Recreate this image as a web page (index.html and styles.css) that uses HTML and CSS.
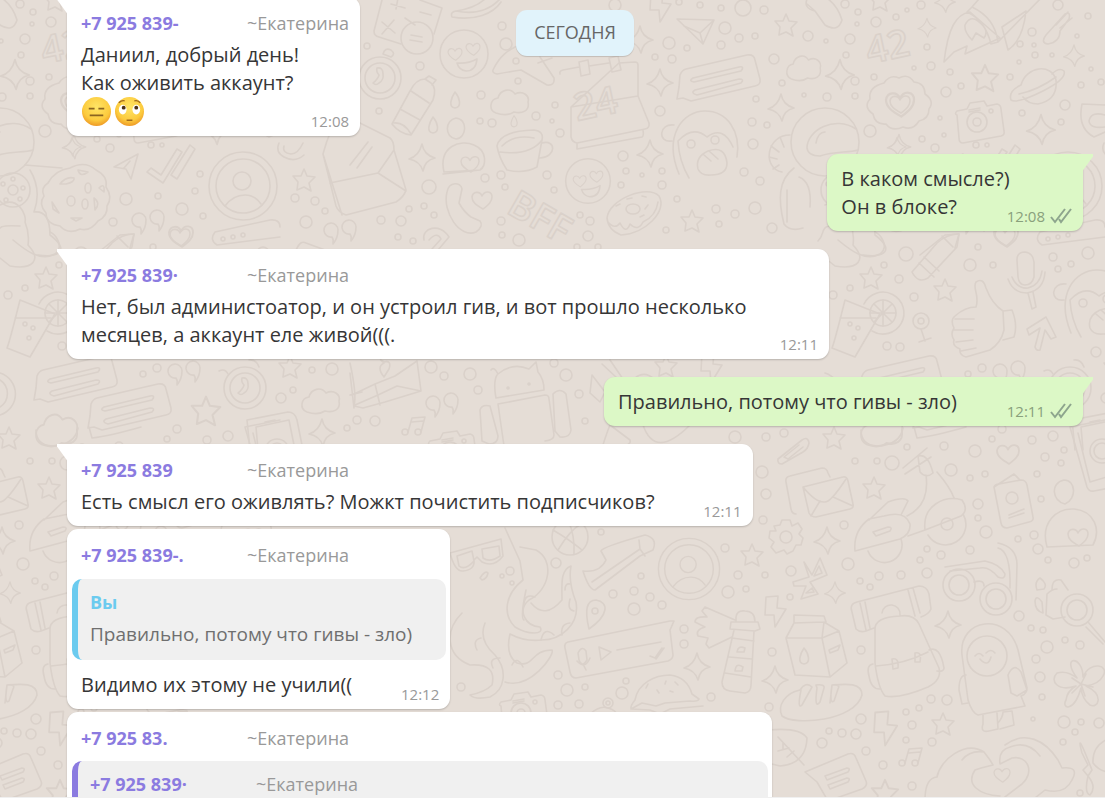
FILE: index.html
```
<!DOCTYPE html>
<html lang="ru">
<head>
  <meta charset="UTF-8">
  <meta name="viewport" content="width=device-width, initial-scale=1.0">
  <title>Чат</title>
  <link rel="stylesheet" href="styles.css">
</head>
<body>
  <!-- Wallpaper doodles, the tile repeats every 825px -->
  <svg class="wallpaper" aria-hidden="true">
    <defs>
      <path id="star" d="M0-11 3-4 11-3 5 3 7 11 0 7-7 10-6 2-11-4-3-4Z"/>
      <path id="spark" d="M0-14Q2-3 13 0Q3 2 1 13Q-2 3-13 1Q-3-2 0-14Z"/>
      <path id="heart" d="M1 9C-6 5-10 2-10-3C-9-9-2-9 0-4C3-10 10-9 10-3C10 2 6 5 1 9Z"/>
      <path id="cloud" d="M-14 11C-22 8-20-3-12-4C-10-12 0-15 5-8C13-12 20-6 18 0C20 9 12 12 4 10C-2 14-8 13-14 11Z"/>
      <path id="drop" d="M0-9C5-3 7 6 0 7C-7 6-4-3 0-9Z"/>
      <path id="bolt" d="M-8-15 4-16 3-4 12-3 1 15 0 3-9 3Z"/>
      <path id="quote" d="M-9 5A7 7 0 1 1-3-2Q-3 6-8 12Q-7 8-9 5ZM9 2A7 7 0 1 1 15-5Q15 3 10 9Q11 5 9 2Z"/>
      <path id="tick" d="M-20 3-16-1-6 6 10-20 15-17-4 14ZM4 6 23-24 28-20 10 10Z"/>
      <g id="note"><path d="M-5 6-1-8 12-9 8 6M-1-4 10-5"/><circle cx="-8" cy="6" r="3"/><circle cx="5" cy="6" r="3"/></g>
      <g id="love"><circle r="24"/><use href="#heart" transform="translate(-9 0) scale(.7)"/><use href="#heart" transform="translate(9-5) scale(.7)"/><path d="M-7 9Q4 10 13 5Q12 17 2 17Q-5 16-7 9Z"/></g>
      <g id="person"><circle r="34"/><circle r="27"/><circle cx="-1" cy="-5" r="9"/><path d="M-18 20Q-10 9 2 9Q12 9 18 18"/></g>
      <g id="clock"><circle r="21"/><circle r="15"/><path d="M-3-10Q-4-6-1-3Q-2 1-7 5Q-4 8-1 5Q4 2 3-4Q3-11-3-10Z"/></g>
      <g id="camera"><path d="M-20-7Q-23-8-20-11L-10-13-7-19 7-21 10-16 20-18Q24-17 24-13L27 9Q28 13 24 14L-14 21Q-18 21-18 16Z"/><circle r="10"/><circle r="4"/><circle cx="14" cy="-11" r="2"/><path d="M-8-12 3-14M-8-10 3-12"/></g>
      <g id="letter"><path d="M-34 22Q-38 22-39 17L-44-10Q-45-15-40-16L-8-24Q-3-24-2-19L0-15"/><path d="M-27-5 13-15Q17-16 18-11L23 12Q24 16 20 17L-14 25Q-19 25-21 21ZM-27-5Q-14 11-5 10Q1 10 16-13M-19 24-10 9M3 5 23 14"/></g>
      <g id="lines"><path d="M-33-15 28-29Q35-30 36-24L41-5Q42 1 36 2L-28 17-36 14-42 15-40 3-39-9Q-37-14-33-15Z"/><path d="M-26-6 20-17Q26-18 22-13L-25-2Q-31-3-26-6ZM-24 6 20-5Q26-5 22-1L-22 11Q-29 9-24 6Z"/></g>
      <g id="monkey"><path d="M-24 25C-40-14-20-38 2-38C24-38 38-18 34 8M-31-8C-46-6-44-26-29-24M-14 29Q-24 12-25-8Q-10-24 4-12Q20-24 30-2"/><circle cx="-12" cy="-5" r="4"/><circle cx="12" cy="-9" r="4"/><path d="M-5 20Q-8 8 5 2Q22-4 24 14Q24 26 8 26Q-2 27-5 20ZM1 6 8 12M6 2 15 10"/></g>
      <g id="drink"><path d="M-25-30 10-16-15 27-38 18Q-36 14-25-30ZM-30-12 6-12"/><path d="M-6-26A21 21 0 1 1 2 1"/><circle cx="13" cy="-17" r="13"/><path d="M13-30V-4M0-17H26M4-26 22-8M4-8 22-26"/><circle cx="-20" cy="-6" r="2"/><circle cx="-12" cy="-2" r="2"/><circle cx="-16" cy="8" r="2"/></g>

      <g id="tile">
        <!-- top row -->
        <path d="M382 0 374 31Q374 36 379 37L401 44M434 34 442 8 420 0M391 4 405 8M398-2 396 9M420 12 431 15M382 22 395 33M394 20 382 34M405 18 415 25"/>
        <circle cx="417" cy="38" r="16"/><path d="M411 35 422 37M410 40 422 42"/>
        <path d="M500-1C488 12 471 14 456 11Q450 12 452 17C475 21 493 14 501 2M456 11C470 9 480 4 486-2"/>
        <use href="#love" x="464" y="54"/>
        <use href="#love" transform="translate(588 181) scale(.93)"/>
        <use href="#clock" x="380" y="78"/>
        <path d="M383 54Q385 47 391 50Q396 54 391 57Z"/>
        <path d="M392 124 410 91Q416 79 425 79L431 83Q437 88 433 100L411 135Q400 134 392 124ZM400 109 420 120M411 91 429 103M394 123Q404 122 411 134M425 79 429 76 436 80 432 85"/>
        <use href="#drop" x="455" y="101"/><use href="#drop" x="433" y="126"/><use href="#drop" transform="translate(514 122) scale(.7)"/>
        <path d="M493 70C500 55 509 50 517 46M540 57 554 78Q555 86 547 85L521 70Q508 72 497 74Q492 73 493 70M552 58 538 63"/>
        <use href="#cloud" x="510" y="102"/>
        <path d="M560 74Q559 71 563 70L579 67M589 66 609 63M619 63 635 62Q638 62 638 65V96L649 123Q650 128 645 129L577 143Q572 142 571 137V107ZM571 107 638 96M577 143V149L642 137Q644 136 643 130M579 62 588 60 590 74 581 76ZM609 58 618 56 621 70 612 72Z"/>
        <text class="doodle-text" transform="translate(577 121) rotate(-12)">24</text>
        <path d="M497 146Q500 131 534 130Q544 131 542 140L537 167Q524 174 507 170Q499 158 497 146ZM500 152Q530 156 542 140M502 146Q514 134 534 138M542 143C556 139 557 157 540 158"/>
        <path d="M456 118C468 119 467 138 456 139C444 137 445 120 456 118ZM444 172C438 146 461 139 474 145C488 151 486 166 480 170ZM443 174 480 170"/>
        <use href="#heart" transform="translate(470 164) scale(.9)"/>
        <path d="M447 192C449 181 461 182 462 189L459 203Q464 212 471 217L480 221Q484 226 476 232C460 239 442 212 447 192Z"/>
        <use href="#heart" x="482" y="200"/>
        <text class="doodle-text" transform="translate(505 212) rotate(30)">BFF</text>
        <path d="M607 218C609 199 648 184 659 196C668 211 645 234 621 235Q608 230 607 218ZM608 222Q615 230 620 223Q626 235 630 224Q638 232 643 222Q656 216 658 202M616 206 620 204M627 199 632 198M642 196 646 197M648 205 645 209M640 217 644 215"/><ellipse cx="633" cy="209" rx="7" ry="5"/>
        <use href="#star" x="692" y="221"/><use href="#spark" x="422" y="158"/><use href="#spark" x="650" y="154"/><use href="#spark" x="660" y="83"/><use href="#spark" x="640" y="40"/>
        <use href="#bolt" x="659" y="7"/>
        <path d="M677 19 714 20 703 44ZM703 44 700 33 714 20M684 26 700 33"/>
        <use href="#lines" x="719" y="84"/>
        <use href="#monkey" x="703" y="149"/>
        <path d="M323 154Q330 128 340 115L360 123 390 138Q394 141 394 150L406 190Q404 197 396 202L346 215Q338 212 336 206ZM323 154 342 215M330 183 378 173 406 191M378 173 394 150M350 165 368 142M357 168 372 147"/>
        <path d="M424 240C421 228 440 222 449 237L438 250M429 240Q437 231 441 239L432 249"/>

        <!-- rocket, planet and other space bits -->
        <use href="#star" x="786" y="25"/><use href="#star" transform="translate(985 78) scale(1.2)"/><use href="#star" x="880" y="0"/>
        <use href="#spark" transform="translate(840 75) scale(1.1)"/><use href="#spark" transform="translate(927 28) scale(.7)"/><use href="#spark" x="781" y="108"/><use href="#spark" transform="translate(897 147) scale(.7)"/><use href="#spark" transform="translate(1041 130) scale(1.1)"/><use href="#spark" transform="translate(1074 56) scale(.8)"/><use href="#spark" transform="translate(945 2) scale(.8)"/>
        <use href="#cloud" transform="translate(804 68) scale(.9 1)"/>
        <text class="doodle-text" transform="translate(869 64) rotate(-12)">42</text>
        <path d="M944 62C948 28 956 14 970 12L1000 38 965 54 967 46 954 52ZM967 12 972 7Q995 18 998 42L991 44Q985 20 967 12M972 7 985-8M998 42 1045-6M1002 27 1026 11Q1023 40 1008 50ZM965 25Q970 15 978 21Q990 30 984 38L976 33 972 40Q964 32 965 25"/>
        <path d="M808-3Q802 8 815 11L825 25Q838 33 842 20Q837 4 825-3M815 11 807 4M1046 35 1065 14Q1071 11 1069 19L1060 31Q1060 42 1048 44Q1040 43 1046 35M1056 25 1068 12M1060 28 1072 18"/>
        <path d="M884 83Q890 74 899 78Q908 73 914 82Q925 83 925 94Q935 101 929 109Q929 119 919 121Q913 131 903 127Q892 132 886 124Q875 125 873 114Q863 107 870 99Q868 87 884 83Z"/>
        <use href="#heart" transform="translate(900 104) scale(1.4)"/><use href="#heart" x="900" y="104"/>
        <path d="M1021 85C1026 66 1052 63 1056 80Q1058 100 1038 104Q1028 104 1023 97M1021 85Q1008 91 1011 100Q1017 104 1043 91Q1067 79 1064 71Q1059 67 1052 74M1019 94Q1038 90 1056 77"/>
        <use href="#camera" x="977" y="122"/>
        <circle cx="825" cy="142" r="34"/><path d="M856 129C835 115 807 130 807 148Q808 156 820 156C835 151 848 153 858 150M816 143Q818 132 825 132M790 135C766 135 762 168 782 172M780 137 784 147M771 146 779 152M769 157 777 159M773 169 779 165M794 168C778 180 778 200 784 224Q790 232 803 228M810 207Q812 182 799 177M787 190V222"/>
        <path d="M1105 105 1082 104Q1077 128 1094 137L1105 132M1105 115Q1091 111 1089 121Q1090 129 1105 127"/>

        <!-- middle of the tile -->
        <path d="M912 272 937 243Q947 234 959 234L957 247 928 278Q918 284 912 272ZM919 263 934 277M924 257 939 271"/>
        <use href="#star" x="871" y="278"/><use href="#star" x="945" y="290"/><use href="#star" x="834" y="438"/>
        <path d="M818 241C828 231 815 224 845 226M838 240C850 250 865 262 880 254C890 246 880 234 875 232"/>
        <use href="#heart" x="1005" y="237"/>
        <path d="M1040 232 1095 220Q1105 219 1105 227M1040 232Q1034 240 1042 245L1105 237"/><circle cx="1048" cy="239" r="2"/><circle cx="1058" cy="237" r="2"/><circle cx="1068" cy="235" r="2"/>
        <path d="M1017 260Q1017 252 1025 252Q1033 253 1034 262V277Q1032 285 1025 285Q1019 285 1018 277ZM1008 279Q1013 293 1027 293Q1044 290 1045 272M1012 277Q1017 289 1028 288Q1040 285 1042 271M1028 293 1032 309 1036 307 1033 292"/>
        <path d="M976 307C980 295 972 288 976 282Q983 277 986 288Q992 304 1003 311L1004 330Q1001 343 990 350L966 357Q959 355 960 349Q952 346 954 340Q950 334 954 328Q950 320 955 316Q965 307 976 307ZM955 319H974M954 330H973M956 342 973 340M961 351 976 348M1003 311 1012 310Q1018 325 1014 337L1003 340"/>
        <path d="M1046 317 1056 337 1051 339 1045 330 1040 350Q1036 351 1035 347L1040 328 1029 335 1027 329Z"/>
        <use href="#monkey" x="1095" y="308"/>
        <use href="#drink" transform="translate(870 330)"/>
        <circle cx="921" cy="321" r="8"/><circle cx="921" cy="321" r="3"/><path d="M921 329 925 341M919 342 931 338"/>
        <use href="#lines" x="901" y="385"/>
        <use href="#quote" x="1010" y="373"/>
        <use href="#clock" x="1070" y="388"/><path d="M1044 371Q1050 368 1053 374M1074 360Q1081 359 1084 367"/>

        <!-- row under the second bubble -->
        <path d="M350 363Q357 395 354 406L363 408 385 402 421 391 417 361M352 395 375 384 395 376 417 361M355 405 378 395 397 386 421 391M375 384 380 405"/>
        <path d="M384 363Q377 357 384 362Q392 360 389 369L384 377Q376 367 384 363"/>
        <path d="M491 370Q494 366 498 374Q512 362 529 369L536 362 538 372Q544 379 544 390L496 398Q493 382 497 375M498 404 545 395Q549 395 549 399L554 435Q554 440 545 441M498 404 504 446M480 410Q482 404 490 406L498 436Q498 444 489 444L482 441ZM553 394Q560 387 566 394L571 430Q570 438 560 437L555 431Z"/><circle cx="508" cy="388" r="1"/><circle cx="529" cy="384" r="1"/>
        <use href="#quote" x="443" y="405"/><use href="#note" x="413" y="426"/>
        <use href="#camera" x="450" y="452"/>
        <path d="M592 375 605 392 600 402 590 393ZM635 378Q645 370 655 380M610 360 625 382M602 364 617 378"/>
        <use href="#star" x="666" y="366"/><use href="#bolt" x="710" y="368"/>
        <path d="M602 448Q607 432 610 425L630 440Q632 445 620 447M643 425Q655 460 690 425"/>
        <path d="M778 459 802 440Q808 436 809 443Q808 449 803 452L782 464Q777 464 778 459M784 457 799 445M784 457 788 459 803 447"/>
        <use href="#letter" x="830" y="492"/>
        <use href="#star" x="874" y="488"/><use href="#star" x="752" y="555"/><use href="#star" x="943" y="724"/><use href="#star" transform="translate(885 793) scale(1.2)"/>
        <path d="M861 430Q861 445 877 446Q900 445 903 428M914 427 917 438Q935 436 966 427"/>
        <!-- scooter -->
        <path d="M855 551Q853 531 869 519L884 516Q905 510 910 524Q911 534 900 539ZM869 520 888 502Q905 496 908 501L901 515M855 551 900 539M868 551A17 17 0 0 0 901 539M925 530C922 505 945 495 962 500Q969 510 961 516ZM925 530 908 536M907 516Q930 505 926 475M937 472Q950 487 954 498M928 535A18 18 0 0 0 963 514M903 468 927 448M905 474 931 457M918 456Q928 453 933 473Q926 479 920 472ZM873 532 888 527Q893 527 890 531L876 536Z"/><circle cx="947" cy="524" r="6"/>
        <path d="M994 487Q995 484 999 484L1021 480Q1026 480 1027 485L1033 517Q1034 521 1029 522L1007 528Q1002 528 1001 523ZM994 487 1014 474 1020 480M1009 515 1024 509M1009 518 1024 513"/><circle cx="1012" cy="498" r="6"/>
        <use href="#heart" transform="translate(1008 454) scale(1.1)"/>
        <path d="M1070 427 1087 487Q1089 492 1094 491L1110 488M1078 433 1090 482 1110 476M1070 427 1105 420"/><circle cx="1102" cy="451" r="12"/><circle cx="1102" cy="451" r="8"/>
        <path d="M1064 480C1076 480 1077 499 1065 504C1052 501 1050 483 1064 480ZM1047 547C1040 522 1057 508 1074 509C1095 511 1101 530 1093 545Z"/><use href="#heart" x="1078" y="537"/>
        <!-- gear -->
        <path d="M780 525 782 520H790L792 526 798 523 802 529 799 534 803 538 801 545 796 545 793 551 787 554 784 550 776 553 771 547 774 542 769 538 770 531 776 531 774 526Z"/><circle cx="786" cy="537" r="6"/>
        <use href="#spark" x="827" y="541"/><use href="#spark" transform="translate(835 593) scale(.8)"/><use href="#spark" x="948" y="625"/><use href="#spark" x="775" y="680"/><use href="#spark" x="697" y="667"/>
        <path d="M804 562 812 575 820 558 827 575 810 582 818 594 801 599 806 586 794 586 793 582 809 577ZM814 576 819 566 822 573ZM806 593 812 588 814 592Z"/>
        <use href="#bolt" x="774" y="612"/><use href="#bolt" transform="translate(884 729) scale(1.1)"/>
        <path d="M786 638 794 623 824 622 839 631 847 663 830 677 795 675ZM786 638H822L830 677M822 638 824 622M794 623V615L824 616 826 622M822 638 839 631M829 650 840 645 838 650 830 653Z"/><use href="#drop" x="804" y="657"/>
        <!-- backpack -->
        <path d="M852 612Q849 604 857 602L919 586Q927 586 929 594L931 609Q929 614 921 617M852 612 856 629Q860 633 866 631L874 628M860 603 866 630M865 602 870 628M908 590 915 616M913 588 920 613M875 663V630Q874 617 900 616Q914 614 919 624L939 668Q942 680 928 687Q900 699 885 696Q878 688 875 663ZM876 666Q905 664 928 652M873 664Q866 665 869 676 871 690 881 689M929 650Q940 645 944 668Q944 672 937 671M892 659Q899 657 898 668L893 669ZM915 653Q922 651 920 662L915 662ZM882 613A9 9 0 0 1 900 615"/>
        <!-- glasses -->
        <circle cx="959" cy="585" r="16"/><circle cx="959" cy="585" r="10"/><circle cx="996" cy="599" r="16"/><circle cx="996" cy="599" r="10"/><path d="M945 567 985 561Q1000 564 1005 574Q1005 580 998 577Q989 566 980 568L950 571M974 582Q984 579 984 586M998 543Q1017 547 1017 565L1016 600M998 548Q1011 551 1010 588"/>
        <!-- hooded figure -->
        <path d="M962 655C958 618 1008 611 1018 650L1027 688Q1027 694 1021 696L1025 706 978 715Q972 713 968 700ZM966 675Q959 675 959 690L962 704 968 703M1008 675Q1014 662 1021 672L1027 690 1017 696 1011 693ZM983 715V724Q980 733 989 731L998 729 997 713M998 723Q1003 717 1003 712L1012 711 1014 725 1000 729M975 656Q979 651 983 656M986 653Q991 648 995 653M980 659Q988 668 991 657"/><circle cx="987" cy="656" r="20"/>
        <path d="M1037 590Q1034 582 1040 578Q1048 584 1044 589ZM1035 601Q1036 594 1042 602L1043 613Q1035 611 1035 601M1052 590Q1052 578 1061 580L1068 590M1057 589Q1052 589 1047 594L1046 615 1053 619 1065 617M1088 622 1105 642M1086 627 1103 644"/><circle cx="1077" cy="610" r="16"/><circle cx="1077" cy="610" r="10"/>
        <!-- flower -->
        <path d="M1077 678C1060 655 1083 655 1083 677C1090 660 1110 665 1103 676Q1099 684 1086 686C1105 695 1098 709 1090 705Q1082 699 1081 688C1074 713 1061 709 1066 700Q1067 691 1076 686C1058 692 1049 681 1057 673Q1067 670 1077 678ZM1081 684 1072 678M1081 684 1086 674M1081 684 1093 687M1081 684 1085 696M1081 684 1072 693"/>
        <!-- bread -->
        <path d="M800 690C785 693 777 706 782 716C795 726 855 721 862 695C862 682 845 684 832 685L830 703M800 690Q806 681 812 687L802 705Q797 710 801 690M816 685Q825 684 824 688L820 702Q814 710 817 688ZM832 685Q841 684 838 689L834 701Q829 705 832 685"/>
        <path d="M768 730Q800 727 807 738Q806 764 780 766L768 763M778 737 804 765M778 751 789 748M787 757 794 751M783 743V749"/>
        <path d="M805 772 848 754Q854 752 856 758L866 781Q868 786 862 789L828 801 817 782ZM825 776 847 768Q851 768 848 772L827 780ZM828 785 847 778Q851 778 848 782L830 789Z"/>
        <use href="#note" transform="translate(910 757)"/>
        <!-- hands with a heart -->
        <path d="M925 800Q925 778 937 777C940 760 965 740 984 752L990 760 993 765Q980 768 975 770C965 785 980 795 1000 796M962 760Q970 750 984 752M1005 745C1025 730 1045 740 1058 760L1062 768Q1080 766 1072 780Q1065 795 1045 790L1035 798M1000 764Q998 750 1010 747Q1028 740 1040 756M1000 764 1012 758C1028 755 1035 772 1022 784L1005 797"/><use href="#heart" transform="translate(1002 775) scale(.8)"/>
        <path d="M1088 760Q1076 730 1082 753L1088 765 1083 770 1088 776 1092 770ZM1110 738Q1092 745 1093 763Q1100 772 1110 772M1088 776Q1084 793 1090 795Q1097 787 1088 776"/>

        <!-- bottom centre -->
        <path d="M450 553 501 539 503 556Q494 568 482 562L477 557 474 560Q475 570 463 571Q455 572 450 553ZM457 556 472 551 474 561Q465 571 459 566ZM482 549 499 546 500 556Q490 563 483 558ZM480 578Q485 570 488 573Q487 579 482 580Z"/>
        <path d="M505 528 520 561 523 580C504 595 503 615 515 627C528 635 545 635 540 627C525 626 517 610 529 600C550 590 555 560 536 550L520 547M531 603Q545 620 562 600C562 585 560 570 571 566Q568 582 576 602C580 625 560 640 542 640Q525 642 510 634M510 634Q505 655 517 663C535 668 530 650 552 650C555 655 530 690 505 682M462 613C445 630 445 655 470 665Q497 663 492 685Q485 692 470 695Q475 700 490 697C505 690 508 670 495 655Q478 640 485 623"/>
        <path d="M524 604Q525 593 535 597M565 590Q565 583 570 584M574 611Q567 610 570 599M562 635Q560 624 570 623M541 640Q544 626 554 635M526 590Q520 618 524 620M477 650Q472 640 481 638M493 668Q488 658 500 658M512 665Q517 655 523 667"/>
        <circle cx="570" cy="537" r="18"/><path d="M553 530Q570 540 582 550M558 550Q570 530 581 524M568 520Q575 535 574 554"/>
        <path d="M583 571Q600 573 606 560L601 551Q602 547 645 535Q658 538 653 550L640 556 595 590Q589 590 583 571ZM592 582 640 549 639 540M640 549 645 556"/>
        <use href="#person" transform="translate(689 569) scale(.9)"/>
        <path d="M589 629Q582 600 596 600C609 602 609 615 589 629Z"/><circle cx="595" cy="611" r="3"/>
        <path d="M568 642 670 621 674 621 670 630 673 655Q673 659 668 661L576 678Q571 678 570 672L565 648Q564 643 568 642ZM578 653Q582 645 586 651L587 660Q582 668 579 660ZM577 661Q585 670 590 658M584 666 586 670M599 647 611 652 601 660ZM617 650 661 642M650 656 655 658 662 648M656 659 664 648"/>
        <path d="M736 622V617Q737 610 745 611Q755 611 755 622ZM731 622H758L760 629 755 631 730 629ZM734 630 722 682Q722 690 730 691L745 693Q751 692 751 685L754 631M732 638 754 641M729 657 752 659M725 673 751 677M737 652Q738 645 745 648L744 652ZM735 671Q736 662 743 667L742 671ZM735 620 705 607 702 611 707 617Q695 616 695 622L705 627Q695 630 698 636L708 638 706 644 709 648 732 637"/>
        <path d="M635 700C638 683 655 675 670 675Q687 677 692 694L699 699Q698 702 690 701L665 703 656 706 642 703 631 709Q630 706 635 700ZM631 709 650 710 660 714 670 709 703 706M646 688 648 684M657 690 659 693M665 684 666 681M675 682 678 685M670 691 673 692"/>
        <use href="#camera" x="521" y="713"/>
        <path d="M590 714Q600 705 608 708Q616 710 618 716"/><circle cx="608" cy="703" r="5"/><circle cx="608" cy="703" r="2"/>
      </g>

      <!-- pieces of the same tile that sit at its left edge -->
      <g id="edge">
        <path d="M48 183Q55 170 70 168Q85 160 96 170Q108 176 106 187Q113 197 107 206Q108 216 98 221Q90 232 80 229Q68 235 60 226Q46 224 46 213Q38 204 44 196Q40 188 48 183ZM60 184Q66 176 74 178Q75 182 66 184ZM78 170Q80 178 88 172ZM52 202 59 213 53 209ZM71 218H82L76 221ZM94 198Q101 203 95 210ZM99 188Q105 182 104 192Z"/>
        <ellipse cx="88" cy="188" rx="3" ry="5"/><ellipse cx="71" cy="201" rx="4" ry="5"/><ellipse cx="85" cy="204" rx="3" ry="5"/>
        <circle cx="13" cy="190" r="17"/><circle cx="13" cy="190" r="5"/><circle cx="3" cy="184" r="2"/><circle cx="13" cy="179" r="2"/><circle cx="23" cy="188" r="2"/><circle cx="20" cy="199" r="2"/><circle cx="6" cy="200" r="2"/>
        <path d="M25 165 62 168M30 170Q42 190 34 212Q50 210 50 235C70 250 60 258 38 255M0 205C18 195 27 215 25 222C30 234 28 245 28 245C42 260 33 270 10 266L0 258"/>
        <use href="#tick" x="167" y="169"/>
        <path d="M114 167 138 154 131 179 126 169ZM124 168 130 161"/>
        <use href="#person" x="243" y="186"/><use href="#spark" transform="translate(74 147) scale(.9)"/>
        <use href="#quote" x="149" y="222"/><use href="#heart" transform="translate(181 236) scale(1.2)"/>
        <path d="M95 255 120 235 134 234 130 248M117 236 128 247"/>
        <use href="#lines" transform="translate(130 413)"/>
        <use href="#cloud" transform="translate(57 430) scale(1.1 1.3)"/>
        <use href="#star" transform="translate(206 411) scale(1.3)"/>
        <path d="M0 373A22 22 0 0 1 0 415M0 380A16 16 0 0 1 0 407"/>
      </g>
      <g id="dots">
        <circle cx="502" cy="26" r="4"/><circle cx="506" cy="44" r="6"/><circle cx="420" cy="66" r="4"/><circle cx="516" cy="61" r="3"/><circle cx="518" cy="81" r="3"/><circle cx="481" cy="95" r="4"/><circle cx="379" cy="111" r="3"/><circle cx="555" cy="105" r="3"/><circle cx="536" cy="116" r="4"/><circle cx="480" cy="121" r="3"/><circle cx="492" cy="123" r="4"/><circle cx="552" cy="121" r="2"/><circle cx="560" cy="133" r="4"/><circle cx="367" cy="46" r="3"/>
        <circle cx="623" cy="156" r="5"/><circle cx="626" cy="171" r="3"/><circle cx="642" cy="175" r="2"/><circle cx="662" cy="171" r="3"/><circle cx="662" cy="185" r="4"/><circle cx="621" cy="185" r="3"/><circle cx="485" cy="178" r="4"/><circle cx="501" cy="175" r="4"/><circle cx="547" cy="175" r="4"/><circle cx="505" cy="187" r="3"/><circle cx="554" cy="190" r="3"/><circle cx="429" cy="187" r="7"/><circle cx="409" cy="209" r="3"/><circle cx="424" cy="206" r="3"/><circle cx="434" cy="215" r="3"/><circle cx="401" cy="221" r="5"/><circle cx="381" cy="220" r="4"/><circle cx="398" cy="237" r="3"/><circle cx="413" cy="241" r="3"/>
        <circle cx="501" cy="221" r="4"/><circle cx="502" cy="235" r="3"/><circle cx="519" cy="240" r="6"/><circle cx="580" cy="215" r="3"/><circle cx="590" cy="221" r="4"/><circle cx="588" cy="236" r="5"/><circle cx="577" cy="247" r="3"/><circle cx="598" cy="247" r="3"/><circle cx="666" cy="230" r="3"/><circle cx="677" cy="199" r="3"/><circle cx="716" cy="209" r="4"/><circle cx="719" cy="224" r="3"/>
        <circle cx="655" cy="57" r="3"/><circle cx="672" cy="59" r="4"/><circle cx="669" cy="43" r="6"/><circle cx="687" cy="48" r="3"/><circle cx="615" cy="5" r="6"/><circle cx="679" cy="2" r="3"/><circle cx="700" cy="5" r="3"/><circle cx="721" cy="8" r="3"/><circle cx="725" cy="28" r="6"/><circle cx="721" cy="45" r="4"/><circle cx="660" cy="111" r="5"/>
        <circle cx="743" cy="8" r="8"/><circle cx="764" cy="10" r="4"/><circle cx="739" cy="38" r="4"/><circle cx="755" cy="36" r="3"/><circle cx="808" cy="36" r="5"/><circle cx="826" cy="41" r="2"/><circle cx="845" cy="4" r="4"/><circle cx="858" cy="12" r="3"/><circle cx="857" cy="24" r="2"/><circle cx="876" cy="22" r="5"/><circle cx="896" cy="17" r="3"/><circle cx="907" cy="10" r="2"/><circle cx="921" cy="5" r="4"/><circle cx="850" cy="39" r="5"/><circle cx="846" cy="55" r="3"/><circle cx="774" cy="59" r="5"/><circle cx="782" cy="83" r="3"/><circle cx="756" cy="99" r="3"/><circle cx="804" cy="95" r="2"/><circle cx="827" cy="97" r="4"/><circle cx="855" cy="96" r="3"/><circle cx="855" cy="81" r="4"/><circle cx="874" cy="77" r="3"/><circle cx="914" cy="68" r="2"/><circle cx="931" cy="66" r="4"/><circle cx="950" cy="72" r="3"/><circle cx="927" cy="47" r="3"/><circle cx="946" cy="92" r="5"/><circle cx="961" cy="86" r="3"/>
        <circle cx="752" cy="122" r="4"/><circle cx="767" cy="125" r="3"/><circle cx="753" cy="144" r="5"/><circle cx="940" cy="118" r="2"/><circle cx="944" cy="135" r="2"/><circle cx="922" cy="139" r="3"/><circle cx="935" cy="148" r="4"/><circle cx="870" cy="131" r="6"/><circle cx="987" cy="145" r="2"/><circle cx="1010" cy="77" r="3"/><circle cx="1022" cy="113" r="3"/><circle cx="1061" cy="122" r="3"/><circle cx="1065" cy="105" r="5"/><circle cx="1081" cy="85" r="3"/><circle cx="1101" cy="82" r="3"/><circle cx="1091" cy="69" r="2"/><circle cx="1077" cy="36" r="2"/><circle cx="1088" cy="16" r="3"/><circle cx="1058" cy="5" r="5"/><circle cx="1032" cy="32" r="4"/><circle cx="1034" cy="45" r="2"/><circle cx="1020" cy="44" r="3"/><circle cx="1035" cy="55" r="3"/><circle cx="1052" cy="55" r="2"/><circle cx="1019" cy="62" r="2"/><circle cx="744" cy="172" r="4"/><circle cx="760" cy="181" r="4"/><circle cx="755" cy="208" r="6"/><circle cx="735" cy="214" r="4"/><circle cx="772" cy="228" r="5"/>
        <circle cx="906" cy="254" r="7"/><circle cx="884" cy="265" r="3"/><circle cx="899" cy="279" r="4"/><circle cx="850" cy="288" r="3"/><circle cx="833" cy="295" r="4"/><circle cx="970" cy="265" r="6"/><circle cx="978" cy="247" r="3"/><circle cx="993" cy="265" r="3"/><circle cx="914" cy="297" r="4"/><circle cx="887" cy="346" r="4"/><circle cx="900" cy="347" r="4"/><circle cx="982" cy="368" r="4"/><circle cx="968" cy="374" r="3"/><circle cx="1053" cy="257" r="4"/><circle cx="1058" cy="269" r="3"/><circle cx="1071" cy="264" r="3"/><circle cx="1088" cy="253" r="6"/><circle cx="1096" cy="352" r="5"/>
        <circle cx="907" cy="447" r="3"/><circle cx="944" cy="446" r="4"/><circle cx="975" cy="451" r="6"/><circle cx="992" cy="439" r="3"/><circle cx="1032" cy="440" r="4"/><circle cx="1053" cy="436" r="5"/><circle cx="1064" cy="450" r="3"/><circle cx="1002" cy="429" r="4"/>
        <circle cx="976" cy="145" r="3"/><circle cx="1025" cy="174" r="3"/><circle cx="1020" cy="191" r="3"/><circle cx="983" cy="196" r="3"/><circle cx="951" cy="199" r="6"/><circle cx="1007" cy="209" r="6"/><circle cx="938" cy="222" r="4"/><circle cx="1028" cy="216" r="3"/><circle cx="295" cy="198" r="4"/><circle cx="315" cy="201" r="4"/><circle cx="325" cy="211" r="3"/><circle cx="306" cy="222" r="6"/>
        <circle cx="281" cy="398" r="5"/><circle cx="293" cy="390" r="3"/><circle cx="312" cy="370" r="3"/><circle cx="332" cy="369" r="6"/><circle cx="357" cy="420" r="4"/><circle cx="347" cy="428" r="3"/><circle cx="375" cy="421" r="5"/><circle cx="431" cy="367" r="6"/><circle cx="444" cy="376" r="4"/><circle cx="470" cy="374" r="6"/><circle cx="478" cy="390" r="4"/><circle cx="554" cy="363" r="4"/><circle cx="566" cy="375" r="6"/><circle cx="579" cy="394" r="4"/><circle cx="585" cy="421" r="3"/><circle cx="735" cy="437" r="6"/>
        <circle cx="766" cy="437" r="4"/><circle cx="784" cy="433" r="4"/><circle cx="762" cy="472" r="6"/><circle cx="766" cy="494" r="5"/><circle cx="763" cy="520" r="4"/><circle cx="855" cy="461" r="3"/><circle cx="877" cy="461" r="3"/><circle cx="892" cy="463" r="7"/><circle cx="844" cy="525" r="4"/><circle cx="848" cy="564" r="6"/><circle cx="791" cy="571" r="5"/><circle cx="765" cy="575" r="3"/><circle cx="746" cy="589" r="3"/><circle cx="790" cy="597" r="3"/><circle cx="860" cy="581" r="3"/><circle cx="870" cy="587" r="3"/><circle cx="879" cy="576" r="4"/><circle cx="901" cy="575" r="4"/><circle cx="927" cy="573" r="5"/><circle cx="927" cy="549" r="3"/><circle cx="920" cy="560" r="3"/><circle cx="941" cy="555" r="4"/><circle cx="970" cy="550" r="4"/><circle cx="951" cy="470" r="6"/><circle cx="970" cy="478" r="3"/><circle cx="985" cy="474" r="3"/><circle cx="978" cy="504" r="5"/><circle cx="978" cy="518" r="3"/><circle cx="986" cy="532" r="6"/><circle cx="1018" cy="539" r="3"/><circle cx="1034" cy="535" r="4"/><circle cx="1038" cy="549" r="5"/><circle cx="1048" cy="560" r="3"/><circle cx="1074" cy="563" r="5"/><circle cx="1087" cy="558" r="3"/><circle cx="1041" cy="499" r="3"/><circle cx="1037" cy="474" r="3"/><circle cx="1045" cy="457" r="4"/><circle cx="1061" cy="463" r="3"/>
        <circle cx="861" cy="650" r="4"/><circle cx="772" cy="652" r="4"/><circle cx="769" cy="707" r="4"/><circle cx="861" cy="719" r="5"/><circle cx="829" cy="731" r="3"/><circle cx="842" cy="733" r="4"/><circle cx="856" cy="734" r="5"/><circle cx="822" cy="743" r="5"/><circle cx="866" cy="751" r="4"/><circle cx="883" cy="765" r="4"/><circle cx="906" cy="712" r="3"/><circle cx="919" cy="708" r="3"/><circle cx="912" cy="725" r="4"/><circle cx="931" cy="699" r="4"/><circle cx="947" cy="700" r="5"/><circle cx="906" cy="740" r="3"/><circle cx="932" cy="742" r="4"/><circle cx="912" cy="786" r="4"/><circle cx="1019" cy="616" r="5"/><circle cx="1031" cy="628" r="3"/><circle cx="1043" cy="630" r="3"/><circle cx="1047" cy="647" r="6"/><circle cx="1036" cy="659" r="4"/><circle cx="1040" cy="677" r="5"/><circle cx="1065" cy="640" r="3"/><circle cx="1080" cy="645" r="4"/><circle cx="1042" cy="697" r="3"/><circle cx="1033" cy="719" r="2"/><circle cx="1064" cy="722" r="6"/><circle cx="1081" cy="722" r="3"/><circle cx="1099" cy="723" r="5"/><circle cx="1075" cy="732" r="3"/><circle cx="1063" cy="742" r="3"/><circle cx="1080" cy="793" r="3"/>
        <circle cx="601" cy="532" r="3"/><circle cx="556" cy="563" r="5"/><circle cx="510" cy="571" r="4"/><circle cx="502" cy="576" r="2"/><circle cx="512" cy="583" r="2"/><circle cx="641" cy="576" r="3"/><circle cx="634" cy="591" r="4"/><circle cx="613" cy="594" r="4"/><circle cx="650" cy="597" r="4"/><circle cx="662" cy="605" r="4"/><circle cx="634" cy="609" r="6"/><circle cx="725" cy="548" r="4"/><circle cx="738" cy="575" r="4"/><circle cx="728" cy="592" r="6"/><circle cx="684" cy="629" r="4"/><circle cx="684" cy="644" r="4"/><circle cx="558" cy="675" r="4"/><circle cx="567" cy="690" r="6"/><circle cx="585" cy="687" r="3"/><circle cx="626" cy="681" r="3"/><circle cx="622" cy="693" r="6"/><circle cx="461" cy="687" r="4"/><circle cx="558" cy="705" r="4"/><circle cx="579" cy="704" r="4"/><circle cx="711" cy="697" r="4"/>
        <use href="#star" x="304" y="180"/><use href="#star" x="290" y="367"/><use href="#quote" x="341" y="232"/><use href="#cloud" x="321" y="401"/><use href="#spark" x="322" y="433"/>
        <path d="M247 420 288 412Q295 412 297 420L303 450M247 420 250 450M256 427 289 420 295 450M256 427 258 450M265 422 275 420M350 373 354 408M350 395 362 392"/>
        <path d="M296 250Q300 240 306 243L325 250M279 143Q275 152 284 157Q295 163 304 155M284 146Q282 153 291 154Q298 154 303 143"/>
      </g>
    </defs>
    <g class="doodles">
      <use href="#tile"/><use href="#dots"/><use href="#edge"/>
      <use href="#tile" x="-825"/><use href="#dots" x="-825"/>
      <use href="#tile" x="825"/><use href="#dots" x="825"/><use href="#edge" x="825"/>
    </g>
  </svg>

  <main class="chat">
    <div class="day"><span class="day-label">СЕГОДНЯ</span></div>

    <article class="message message-in tail">
      <header class="author"><span class="phone">+7 925 839-</span><span class="nick">~Екатерина</span></header>
      <p class="text">Даниил, добрый день!<br>Как оживить аккаунт?</p>
      <p class="emojis">
        <svg class="emoji" viewBox="0 0 30 30" role="img" aria-label="Невыразительное лицо">
          <defs><radialGradient id="face" cx=".5" cy=".35" r=".65"><stop offset="0" stop-color="#ffe566"/><stop offset=".7" stop-color="#fccb3e"/><stop offset="1" stop-color="#ee9a26"/></radialGradient></defs>
          <circle cx="15" cy="15" r="15" fill="url(#face)"/>
          <path d="M7 12h6M17 12h6M8 19h14" fill="none" stroke="#8a6420" stroke-width="2"/>
        </svg>
        <svg class="emoji" viewBox="0 0 30 30" role="img" aria-label="Закатывает глаза">
          <circle cx="15" cy="15" r="15" fill="url(#face)"/>
          <ellipse cx="8" cy="13" rx="4" ry="5" fill="#fff"/><ellipse cx="22" cy="13" rx="4" ry="5" fill="#fff"/>
          <circle cx="9" cy="11" r="2" fill="#4b3018"/><circle cx="22" cy="11" r="2" fill="#4b3018"/>
          <path d="M4 6q3-3 6-2M20 4q4-1 6 2M12 24h6" fill="none" stroke="#a06a1c" stroke-width="1.5"/>
        </svg>
      </p>
      <div class="meta"><time>12:08</time></div>
    </article>

    <article class="message message-out tail">
      <p class="text">В каком смысле?)<br>Он в блоке?<span class="spacer"></span></p>
      <div class="meta"><time>12:08</time><svg class="checks" viewBox="0 0 22 16" role="img" aria-label="Доставлено"><path d="M1 9 5 14 15 1M9 11 11 14 21 1"/></svg></div>
    </article>

    <article class="message message-in tail">
      <header class="author"><span class="phone">+7 925 839·</span><span class="nick">~Екатерина</span></header>
      <p class="text">Нет, был администоатор, и он устроил гив, и вот прошло несколько месяцев, а аккаунт еле живой(((.<span class="spacer"></span></p>
      <div class="meta"><time>12:11</time></div>
    </article>

    <article class="message message-out tail">
      <p class="text">Правильно, потому что гивы - зло)<span class="spacer"></span></p>
      <div class="meta"><time>12:11</time><svg class="checks" viewBox="0 0 22 16" role="img" aria-label="Доставлено"><path d="M1 9 5 14 15 1M9 11 11 14 21 1"/></svg></div>
    </article>

    <article class="message message-in tail">
      <header class="author"><span class="phone">+7 925 839</span><span class="nick">~Екатерина</span></header>
      <p class="text">Есть смысл его оживлять? Можкт почистить подписчиков?<span class="spacer"></span></p>
      <div class="meta"><time>12:11</time></div>
    </article>

    <article class="message message-in">
      <header class="author"><span class="phone">+7 925 839-.</span><span class="nick">~Екатерина</span></header>
      <blockquote class="quote quote-me">
        <p class="quote-author">Вы</p>
        <p class="quote-text">Правильно, потому что гивы - зло)</p>
      </blockquote>
      <p class="text">Видимо их этому не учили((<span class="spacer"></span></p>
      <div class="meta"><time>12:12</time></div>
    </article>

    <article class="message message-in message-wide">
      <header class="author"><span class="phone">+7 925 83.</span><span class="nick">~Екатерина</span></header>
      <blockquote class="quote">
        <header class="author"><span class="phone">+7 925 839·</span><span class="nick">~Екатерина</span></header>
      </blockquote>
    </article>
  </main>
</body>
</html>
```

FILE: styles.css
```
* {
  box-sizing: border-box;
}
body {
  margin: 0;
  height: 100vh;
  overflow: hidden;
  position: relative;
  background: #e5ddd6;
  border-bottom: 1px solid #f0f0f0;
  font-family: "Open Sans", "Noto Sans", sans-serif;
  color: #363636;
}
p, blockquote {
  margin: 0;
}

/* wallpaper */
.wallpaper {
  position: absolute;
  inset: 0;
  width: 100%;
  height: 100%;
}
.doodles {
  fill: none;
  stroke: #dad1ca;
  stroke-width: 1.6;
  stroke-linejoin: round;
  stroke-linecap: round;
}
.doodle-text {
  font-family: "Open Sans", sans-serif;
  font-size: 38px;
  font-weight: 600;
}

/* chat */
.chat {
  position: relative;
  display: flex;
  flex-direction: column;
  align-items: flex-start;
  margin-top: -3px;
  padding: 0 22px 0 67px;
}
.day {
  position: absolute;
  top: 13px;
  left: 67px;
  right: 22px;
  display: flex;
  justify-content: center;
}
.day-label {
  padding: 8px 18px 10px;
  border-radius: 11px;
  background: #e1f3fb;
  box-shadow: 0 1px 1px rgba(0, 0, 0, 0.15);
  color: #666;
  font-size: 18px;
  line-height: 28px;
}
.message {
  position: relative;
  max-width: 75%;
  margin-top: 3px;
  padding: 12px 11px 10px 14px;
  border-radius: 11px;
  background: #fff;
  box-shadow: 0 1px 2px rgba(0, 0, 0, 0.2);
}
.message.tail {
  margin-top: 18px;
}
.day + .message.tail {
  margin-top: 0;
}
.message-out {
  align-self: flex-end;
  padding: 11px 12px 10px 14px;
  background: #dcf8c6;
}
.message-wide {
  width: 705px;
  min-height: 100px;
}
.tail::before {
  content: "";
  position: absolute;
  top: 0;
  width: 21px;
  height: 17px;
  background: inherit;
}
.message-in.tail::before {
  left: -10px;
  clip-path: polygon(0 0, 100% 0, 100% 100%, 50% 100%, 0 15%);
}
.message-out.tail::before {
  right: -10px;
  clip-path: polygon(0 0, 100% 0, 100% 15%, 50% 100%, 0 100%);
}
.author {
  position: relative;
  display: flex;
  margin-bottom: 4px;
  font-size: 18px;
  line-height: 28px;
}
.phone {
  width: 166px;
  color: #8b7be0;
  font-weight: 700;
}
.nick {
  color: #999;
}
.text {
  font-size: 20px;
  line-height: 28px;
}
.emojis {
  display: flex;
  gap: 4px;
  padding-left: 1px;
}
.emoji {
  width: 29px;
  height: 29px;
}
.spacer {
  display: inline-block;
  width: 87px;
}
.message-out .spacer {
  width: 114px;
}
.meta {
  position: absolute;
  right: 11px;
  bottom: 5px;
  display: flex;
  align-items: center;
  gap: 5px;
  color: #999;
  font-size: 15px;
  line-height: 20px;
}
.message-out .meta {
  color: #89a07c;
}
.checks {
  width: 22px;
  height: 16px;
  fill: none;
  stroke: #8da58d;
  stroke-width: 2;
}

/* quoted message */
.quote {
  margin: 9px -7px 11px -9px;
  padding: 9px 33px 12px 12px;
  border-left: 6px solid #8b7be0;
  border-radius: 10px;
  background: #f0f0f0;
  font-size: 19px;
  line-height: 28px;
}
.quote-me {
  margin-top: 10px;
  border-left-color: #6bcbef;
}
.quote-author {
  margin-bottom: 4px;
  color: #6bcbef;
  font-size: 18px;
  font-weight: 700;
}
.quote-text {
  color: #6f6f6f;
}
```
